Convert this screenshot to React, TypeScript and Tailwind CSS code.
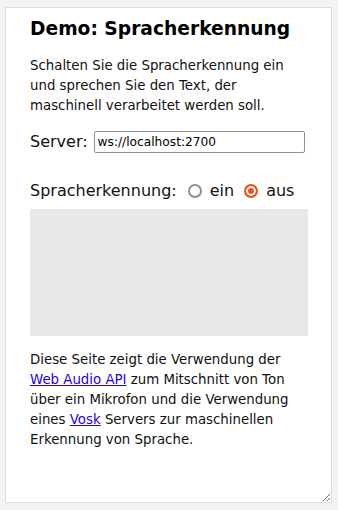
import React from 'react'

export default function App() {
  const radio =
    "appearance-none w-[14px] h-[14px] rounded-full border-2 border-[#8f8f9d] bg-white checked:border-[#e95420] checked:bg-[#e95420] checked:shadow-[inset_0_0_0_2px_#ffffff]"
  return (
    <div className="min-h-[510px] bg-[#f3f3f3] pt-[7px] pl-[5px] font-['DejaVu_Sans',sans-serif] text-[#111]">
      <div className="resize overflow-auto w-[327px] h-[496px] bg-white border border-[#dedede] pl-[24px] pr-[23px] pt-[10px]">
        <h1 className="text-[18.67px] leading-[22px] font-bold text-black whitespace-nowrap">Demo: Spracherkennung</h1>
        <p className="mt-[16px] text-[13.33px] leading-[20px]">
          Schalten Sie die Spracherkennung ein und sprechen Sie den Text, der maschinell verarbeitet werden soll.
        </p>
        <div className="mt-[15px] flex items-center h-[22px] text-[16px] leading-[22px]">
          <label htmlFor="server">Server:</label>
          <input
            id="server"
            type="text"
            defaultValue="ws://localhost:2700"
            className="ml-[6px] w-[211px] h-[22px] border border-[#8f8f9d] rounded-[2px] px-[3px] text-[12.2px] text-black font-['DejaVu_Sans',sans-serif]"
          />
        </div>
        <div className="mt-[27px] flex items-center h-[22px] text-[16px] leading-[22px]">
          <span>Spracherkennung:</span>
          <label className="ml-[11px] flex items-center">
            <input type="radio" name="sr" className={radio} />
            <span className="ml-[8px]">ein</span>
          </label>
          <label className="ml-[10px] flex items-center">
            <input type="radio" name="sr" defaultChecked className={radio} />
            <span className="ml-[8px]">aus</span>
          </label>
        </div>
        <div className="mt-[7px] h-[127px] bg-[#e8e8e8]" />
        <p className="mt-[14px] text-[13.33px] leading-[20px]">
          Diese Seite zeigt die Verwendung der{' '}
          <a href="#" className="text-[#2200ee] underline">Web Audio API</a> zum Mitschnitt von Ton über ein Mikrofon und die Verwendung eines{' '}
          <a href="#" className="text-[#2200ee] underline">Vosk</a> Servers zur maschinellen Erkennung von Sprache.
        </p>
      </div>
    </div>
  )
}
